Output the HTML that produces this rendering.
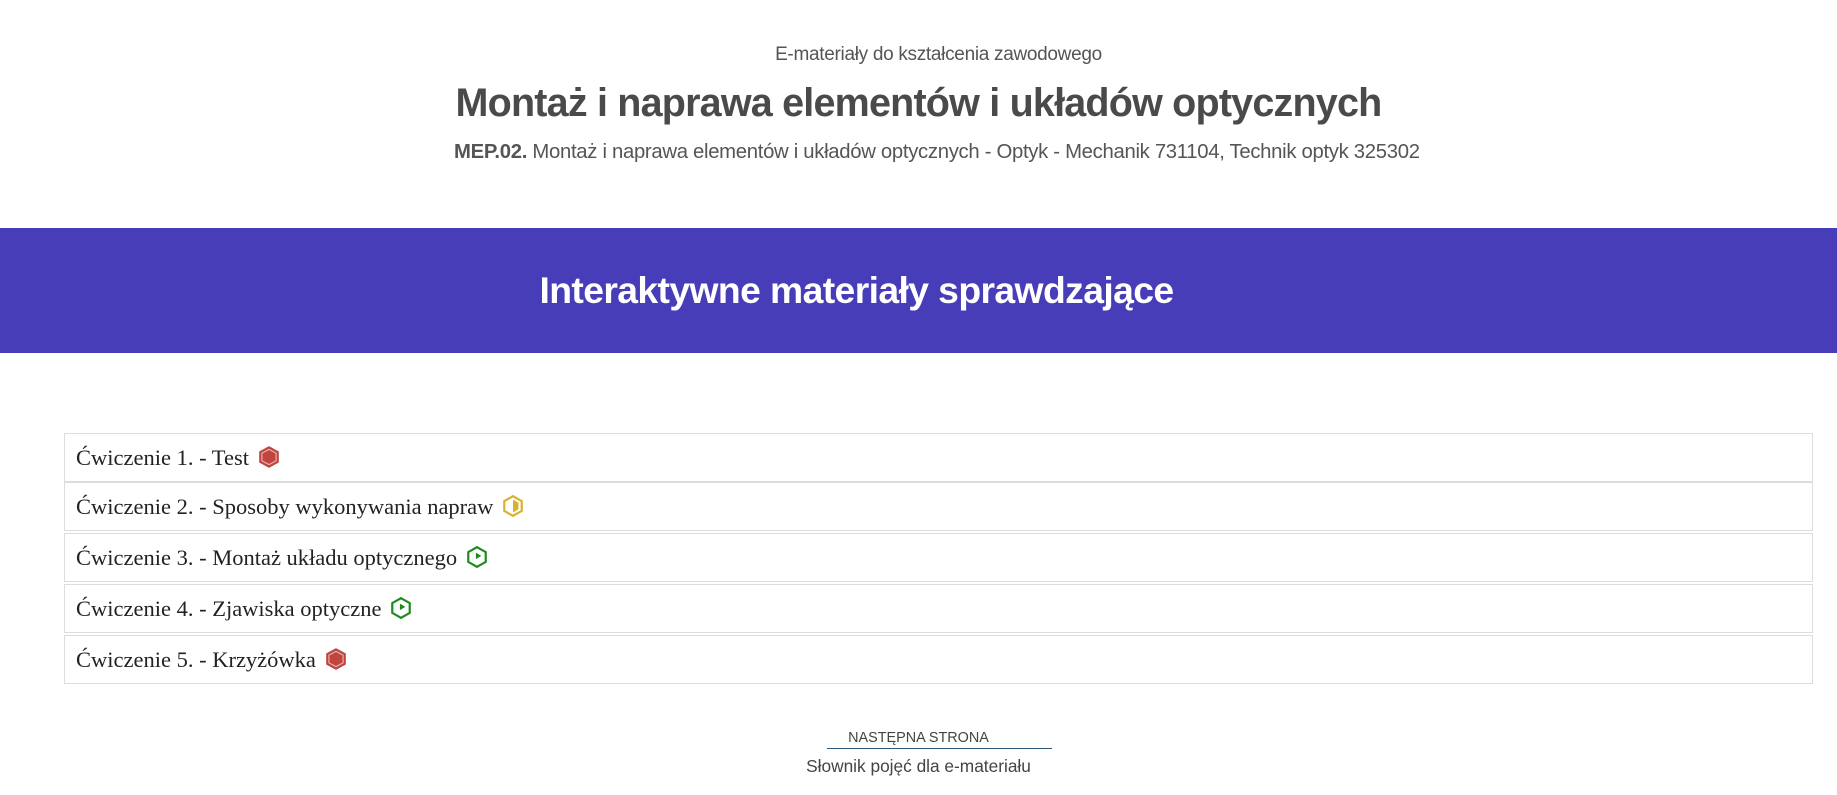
<!DOCTYPE html>
<html><head><meta charset="utf-8"><style>
body{margin:0;width:1837px;height:795px;background:#fff;font-family:"Liberation Sans",sans-serif;color:#444;position:relative;overflow:hidden}
.c{position:absolute;left:0;width:1837px;text-align:center;white-space:nowrap}
.banner{position:absolute;left:0;top:228px;width:1837px;height:125px;background:#483db8}
.row{position:absolute;left:64px;width:1749px;height:49px;border:1px solid #ddd;font-family:"Liberation Serif",serif;font-size:22.5px;color:#222;line-height:47px;padding-left:11px;box-sizing:border-box}
.row svg{vertical-align:-4px;margin-left:3px}
</style></head><body>
<div class="c" style="top:44px;left:20px;font-size:19px;color:#555;letter-spacing:-0.3px">E-materiały do kształcenia zawodowego</div>
<div class="c" style="top:81px;font-size:39.5px;font-weight:bold;color:#4a4a4a;letter-spacing:-0.8px">Montaż i naprawa elementów i układów optycznych</div>
<div style="position:absolute;left:454px;top:141px;font-size:20.3px;color:#555;letter-spacing:-0.3px;white-space:nowrap"><b>MEP.02.</b> Montaż i naprawa elementów i układów optycznych - Optyk - Mechanik 731104, Technik optyk 325302</div>
<div class="banner"></div>
<div style="position:absolute;left:440px;width:833px;top:269px;text-align:center;color:#fff;font-size:37.3px;font-weight:bold;white-space:nowrap;letter-spacing:-0.6px">Interaktywne materiały sprawdzające</div>

<div class="row" style="top:433px">Ćwiczenie 1. - Test <svg width="22" height="24" viewBox="0 0 20 22"><polygon points="10,1 19,6 19,16 10,21 1,16 1,6" fill="#c0453e"/><polygon points="10,4 16.5,7.5 16.5,14.5 10,18 3.5,14.5 3.5,7.5" fill="none" stroke="#e8b8b5" stroke-width="1"/></svg></div>
<div class="row" style="top:482px">Ćwiczenie 2. - Sposoby wykonywania napraw <svg width="22" height="24" viewBox="0 0 20 22"><polygon points="10,2 18,6.5 18,15.5 10,20 2,15.5 2,6.5" fill="#fff" stroke="#d9b22b" stroke-width="2"/><polygon points="10,5 15,8 15,14 10,17" fill="#d9b22b"/></svg></div>
<div class="row" style="top:533px">Ćwiczenie 3. - Montaż układu optycznego <svg width="22" height="24" viewBox="0 0 20 22"><polygon points="10,2 18,6.5 18,15.5 10,20 2,15.5 2,6.5" fill="#fff" stroke="#1e8a1e" stroke-width="2"/><polygon points="9,7 14,10 9,13" fill="#1e8a1e"/></svg></div>
<div class="row" style="top:584px">Ćwiczenie 4. - Zjawiska optyczne <svg width="22" height="24" viewBox="0 0 20 22"><polygon points="10,2 18,6.5 18,15.5 10,20 2,15.5 2,6.5" fill="#fff" stroke="#1e8a1e" stroke-width="2"/><polygon points="9,7 14,10 9,13" fill="#1e8a1e"/></svg></div>
<div class="row" style="top:635px">Ćwiczenie 5. - Krzyżówka <svg width="22" height="24" viewBox="0 0 20 22"><polygon points="10,1 19,6 19,16 10,21 1,16 1,6" fill="#c0453e"/><polygon points="10,4 16.5,7.5 16.5,14.5 10,18 3.5,14.5 3.5,7.5" fill="none" stroke="#e8b8b5" stroke-width="1"/></svg></div>

<div class="c" style="top:730px;font-size:14.4px;color:#444">NASTĘPNA STRONA</div>
<div style="position:absolute;left:827px;top:748px;width:225px;height:1px;background:#2a5a7a"></div>
<div class="c" style="top:756px;font-size:17.3px;color:#444">Słownik pojęć dla e-materiału</div>
</body></html>
